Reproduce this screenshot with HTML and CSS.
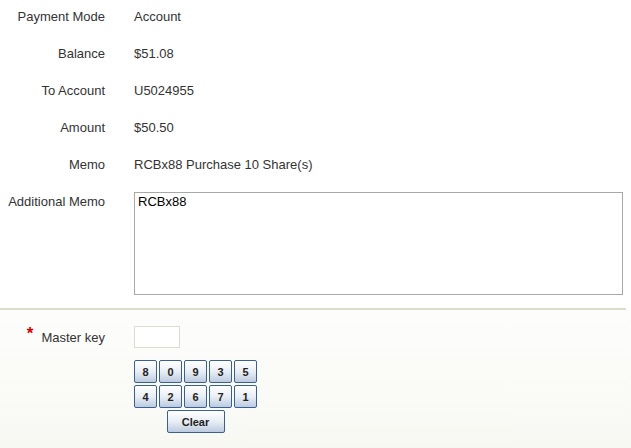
FILE: index.html
```html
<!DOCTYPE html>
<html lang="en">
<head>
    <meta charset="UTF-8">
    <meta name="viewport" content="width=device-width, initial-scale=1.0">
    <title>Payment confirm</title>
    <link rel="stylesheet" href="styles.css">
</head>
<body>

<section class="details">
    <div class="row">
        <div class="label">Payment Mode</div>
        <div class="value">Account</div>
    </div>
    <div class="row">
        <div class="label">Balance</div>
        <div class="value">$51.08</div>
    </div>
    <div class="row">
        <div class="label">To Account</div>
        <div class="value">U5024955</div>
    </div>
    <div class="row">
        <div class="label">Amount</div>
        <div class="value">$50.50</div>
    </div>
    <div class="row">
        <div class="label">Memo</div>
        <div class="value">RCBx88 Purchase 10 Share(s)</div>
    </div>
    <div class="row memo-row">
        <div class="label">Additional Memo</div>
        <div class="value">
            <textarea class="memo-box" name="memo">RCBx88</textarea>
        </div>
    </div>
</section>

<hr class="divider">

<section class="secure">
    <div class="key-row">
        <div class="label"><span class="req">*</span>Master key</div>
        <div class="value">
            <input type="password" class="key-input" name="masterkey">
        </div>
    </div>
    <div class="keypad">
        <div class="keys">
            <button class="key">8</button>
            <button class="key">0</button>
            <button class="key">9</button>
            <button class="key">3</button>
            <button class="key">5</button>
            <button class="key">4</button>
            <button class="key">2</button>
            <button class="key">6</button>
            <button class="key">7</button>
            <button class="key">1</button>
        </div>
        <button class="key clear-key">Clear</button>
    </div>
</section>

</body>
</html>
```

FILE: styles.css
```css
*{
    margin: 0;
    padding: 0;
    box-sizing: border-box;
}

body{
    font-family: "Liberation Sans", Arial, sans-serif;
    font-size: 13px;
    line-height: 15px;
    color: #333;
    background-color: #fff;
}

.row{
    display: flex;
    height: 37px;
    padding-top: 9px;
}

.label{
    width: 105px;
    text-align: right;
}

.value{
    margin-left: 29px;
}

.memo-row{
    height: auto;
    padding-top: 9px;
}

.memo-box{
    display: block;
    width: 489px;
    height: 103px;
    margin-top: -2px;
    padding: 1px 3px;
    border: 1px solid #a8a8a8;
    font-family: "Liberation Sans", Arial, sans-serif;
    font-size: 13px;
    line-height: 15px;
    color: #000;
    resize: none;
    outline: none;
}

.divider{
    width: 626px;
    height: 2px;
    margin-top: 13px;
    border: none;
    background-color: #dcdccd;
}

.secure{
    height: 139px;
    padding-top: 16px;
    background: linear-gradient(#fdfdfc, #f8f8f3);
}

.key-row{
    display: flex;
    align-items: center;
}

.key-row .label{
    padding-right: 0;
}

.req{
    color: #d40000;
    font-weight: bold;
    font-size: 17px;
    position: relative;
    top: -3px;
    margin-right: 8px;
}

.key-input{
    display: block;
    width: 46px;
    height: 22px;
    border: 1px solid #dddccf;
    background-color: #fff;
    outline: none;
}

.keypad{
    display: flex;
    flex-direction: column;
    align-items: center;
    width: 123px;
    margin-left: 134px;
    margin-top: 12px;
    gap: 2px;
}

.keys{
    display: grid;
    grid-template-columns: repeat(5, 23px);
    gap: 2px;
}

.key{
    height: 23px;
    border: 1px solid #3a5f91;
    border-radius: 2px;
    background: linear-gradient(#ffffff, #e9eef5 50%, #bccbe0);
    font-family: "Liberation Sans", Arial, sans-serif;
    font-size: 11px;
    font-weight: bold;
    color: #222;
    cursor: pointer;
}

.clear-key{
    width: 58px;
}
```
